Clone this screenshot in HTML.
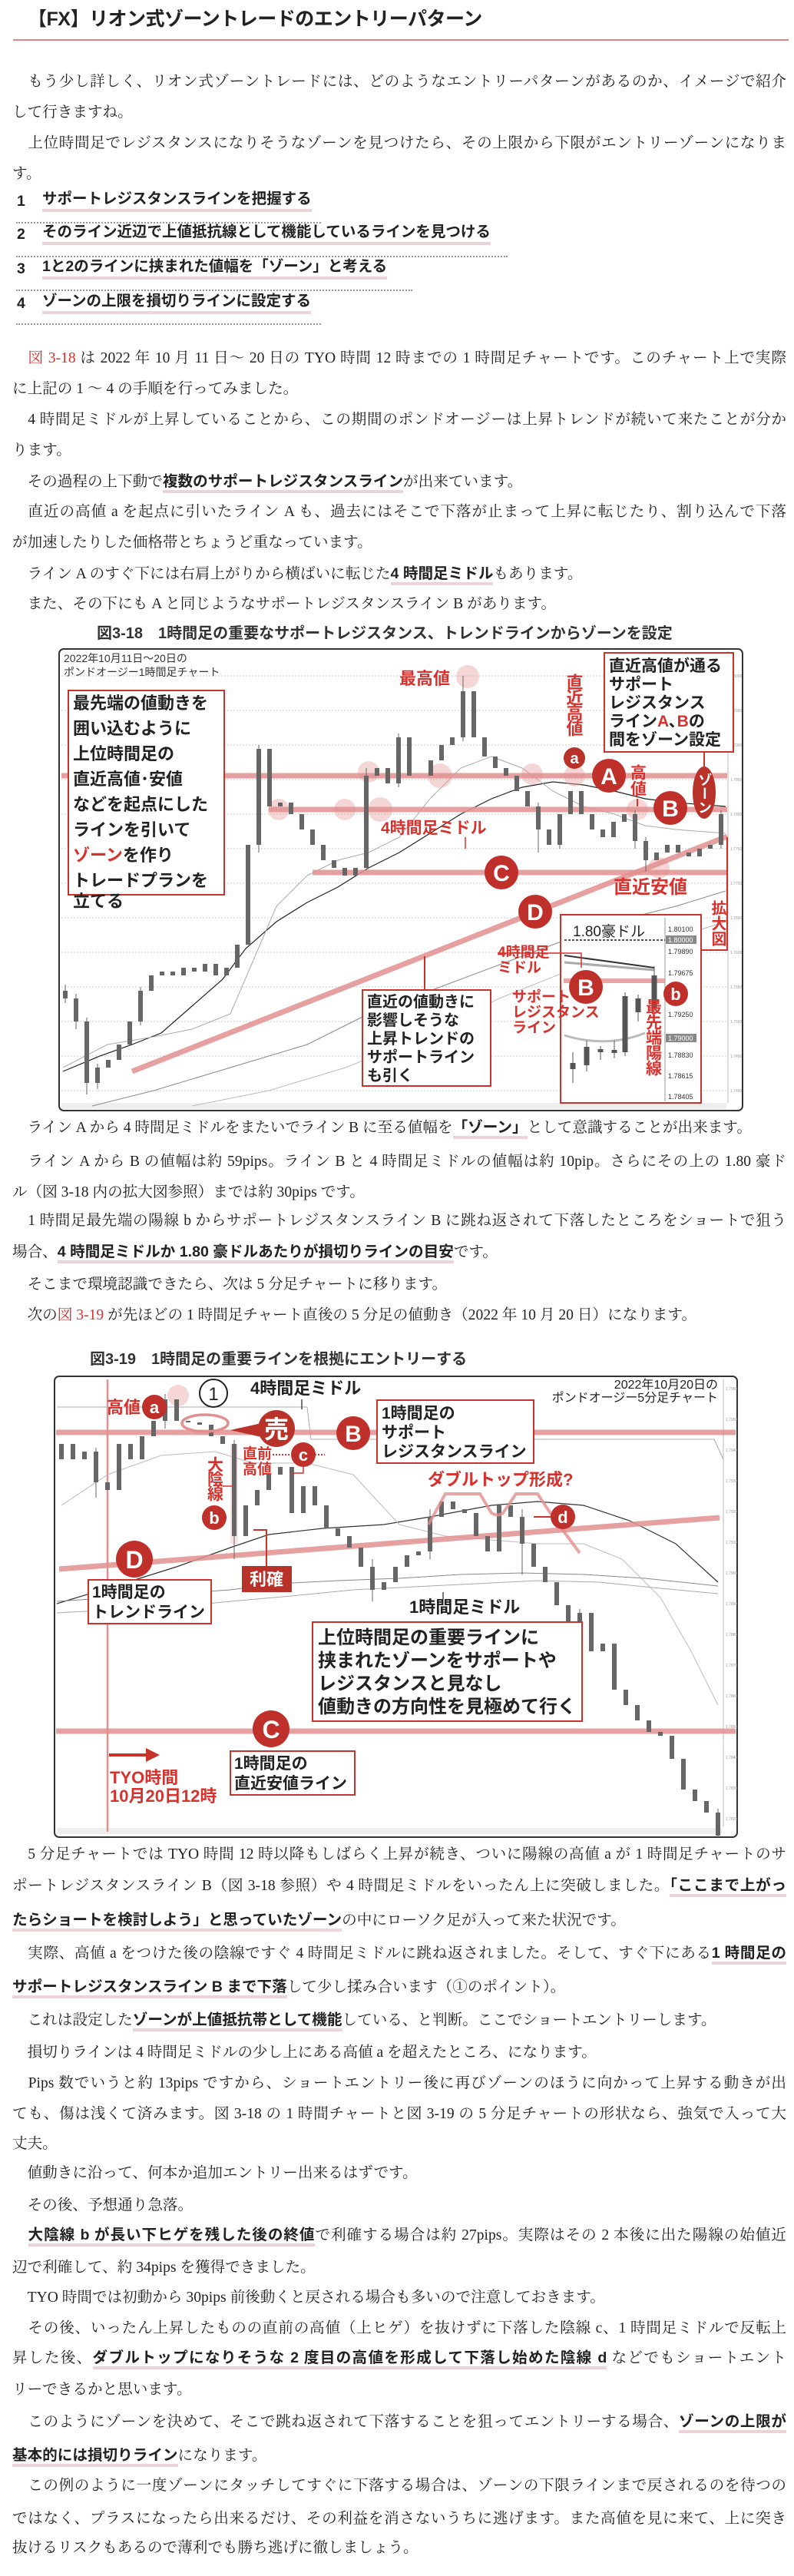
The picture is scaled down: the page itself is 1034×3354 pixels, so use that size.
<!DOCTYPE html>
<html lang="ja"><head><meta charset="utf-8">
<style>
html,body{margin:0;padding:0;background:#fff;}
body{width:1034px;height:3354px;position:relative;overflow:hidden;color:#222;font-family:"Liberation Serif","Noto Serif CJK SC",serif;}
.l{position:absolute;left:16px;width:1008px;height:40px;line-height:40px;font-size:19.6px;white-space:nowrap;}
.j{text-align:justify;text-align-last:justify;}
b{font-family:"Liberation Sans","Noto Sans CJK JP",sans-serif;font-weight:bold;border-bottom:4px solid #ecd3d8;}
.r{color:#d6322e;}
.title{position:absolute;left:36px;top:8px;font-family:"Liberation Sans","Noto Sans CJK JP",sans-serif;font-weight:bold;font-size:25px;line-height:34px;letter-spacing:-0.5px;}
.hr{position:absolute;left:17px;top:51px;width:1010px;height:2px;background:#e08686;}
.li{position:absolute;font-family:"Liberation Sans","Noto Sans CJK JP",sans-serif;font-weight:bold;font-size:19.5px;height:32px;line-height:32px;white-space:nowrap;}
.li .n{position:absolute;left:0;}
.li .t{position:absolute;left:33px;border-bottom:4px solid #ecd3d8;line-height:26px;}
.dot{position:absolute;left:21px;height:0;border-top:2px dotted #999;}
.ft{position:absolute;font-family:"Liberation Sans","Noto Sans CJK JP",sans-serif;font-weight:bold;font-size:20px;color:#333;white-space:nowrap;}
svg{position:absolute;left:0;top:0;}
svg text{font-family:"Liberation Sans","Noto Sans CJK JP",sans-serif;}
</style></head><body>

<div class="title">【FX】リオン式ゾーントレードのエントリーパターン</div>
<div class="hr"></div>

<div class="l j" style="top:87px">　もう少し詳しく、リオン式ゾーントレードには、どのようなエントリーパターンがあるのか、イメージで紹介</div>
<div class="l" style="top:127px">して行きますね。</div>
<div class="l j" style="top:167px">　上位時間足でレジスタンスになりそうなゾーンを見つけたら、その上限から下限がエントリーゾーンになりま</div>
<div class="l" style="top:207px">す。</div>

<div class="li" style="left:22px;top:246px"><span class="n">1</span><span class="t">サポートレジスタンスラインを把握する</span></div>
<div class="dot" style="top:289px;width:397px"></div>
<div class="li" style="left:22px;top:289px"><span class="n">2</span><span class="t">そのライン近辺で上値抵抗線として機能しているラインを見つける</span></div>
<div class="dot" style="top:333px;width:640px"></div>
<div class="li" style="left:22px;top:334px"><span class="n">3</span><span class="t">1と2のラインに挟まれた値幅を「ゾーン」と考える</span></div>
<div class="dot" style="top:377px;width:516px"></div>
<div class="li" style="left:22px;top:379px"><span class="n">4</span><span class="t">ゾーンの上限を損切りラインに設定する</span></div>
<div class="dot" style="top:421px;width:397px"></div>

<div class="l j" style="top:447px">　<span class="r">図 3-18</span> は 2022 年 10 月 11 日～ 20 日の TYO 時間 12 時までの 1 時間足チャートです。このチャート上で実際</div>
<div class="l" style="top:487px">に上記の 1 ～ 4 の手順を行ってみました。</div>
<div class="l j" style="top:527px">　4 時間足ミドルが上昇していることから、この期間のポンドオージーは上昇トレンドが続いて来たことが分か</div>
<div class="l" style="top:567px">ります。</div>
<div class="l" style="top:607px">　その過程の上下動で<b>複数のサポートレジスタンスライン</b>が出来ています。</div>
<div class="l j" style="top:647px">　直近の高値 a を起点に引いたライン A も、過去にはそこで下落が止まって上昇に転じたり、割り込んで下落</div>
<div class="l" style="top:687px">が加速したりした価格帯とちょうど重なっています。</div>
<div class="l" style="top:727px">　ライン A のすぐ下には右肩上がりから横ばいに転じた<b>4 時間足ミドル</b>もあります。</div>
<div class="l" style="top:767px">　また、その下にも A と同じようなサポートレジスタンスライン B があります。</div>
<div class="ft" style="left:126px;top:808px">図3-18　1時間足の重要なサポートレジスタンス、トレンドラインからゾーンを設定</div>

<div class="l" style="top:1448px">　ライン A から 4 時間足ミドルをまたいでライン B に至る値幅を<b>「ゾーン」</b>として意識することが出来ます。</div>
<div class="l j" style="top:1493px">　ライン A から B の値幅は約 59pips。ライン B と 4 時間足ミドルの値幅は約 10pip。さらにその上の 1.80 豪ド</div>
<div class="l" style="top:1533px">ル（図 3-18 内の拡大図参照）までは約 30pips です。</div>
<div class="l j" style="top:1570px">　1 時間足最先端の陽線 b からサポートレジスタンスライン B に跳ね返されて下落したところをショートで狙う</div>
<div class="l" style="top:1610px">場合、<b>4 時間足ミドルか 1.80 豪ドルあたりが損切りラインの目安</b>です。</div>
<div class="l" style="top:1653px">　そこまで環境認識できたら、次は 5 分足チャートに移ります。</div>
<div class="l" style="top:1693px">　次の<span class="r">図 3-19</span> が先ほどの 1 時間足チャート直後の 5 分足の値動き（2022 年 10 月 20 日）になります。</div>
<div class="ft" style="left:117px;top:1753px">図3-19　1時間足の重要ラインを根拠にエントリーする</div>

<div class="l j" style="top:2395px">　5 分足チャートでは TYO 時間 12 時以降もしばらく上昇が続き、ついに陽線の高値 a が 1 時間足チャートのサ</div>
<div class="l j" style="top:2435px">ポートレジスタンスライン B（図 3-18 参照）や 4 時間足ミドルをいったん上に突破しました。<b>「ここまで上がっ</b></div>
<div class="l" style="top:2480px"><b>たらショートを検討しよう」と思っていたゾーン</b>の中にローソク足が入って来た状況です。</div>
<div class="l j" style="top:2523px">　実際、高値 a をつけた後の陰線ですぐ 4 時間足ミドルに跳ね返されました。そして、すぐ下にある<b>1 時間足の</b></div>
<div class="l" style="top:2567px"><b>サポートレジスタンスライン B まで下落</b>して少し揉み合います（①のポイント）。</div>
<div class="l" style="top:2610px">　これは設定した<b>ゾーンが上値抵抗帯として機能</b>している、と判断。ここでショートエントリーします。</div>
<div class="l" style="top:2653px">　損切りラインは 4 時間足ミドルの少し上にある高値 a を超えたところ、になります。</div>
<div class="l j" style="top:2693px">　Pips 数でいうと約 13pips ですから、ショートエントリー後に再びゾーンのほうに向かって上昇する動きが出</div>
<div class="l j" style="top:2733px">ても、傷は浅くて済みます。図 3-18 の 1 時間チャートと図 3-19 の 5 分足チャートの形状なら、強気で入って大</div>
<div class="l" style="top:2772px">丈夫。</div>
<div class="l" style="top:2810px">　値動きに沿って、何本か追加エントリー出来るはずです。</div>
<div class="l" style="top:2852px">　その後、予想通り急落。</div>
<div class="l j" style="top:2890px">　<b>大陰線 b が長い下ヒゲを残した後の終値</b>で利確する場合は約 27pips。実際はその 2 本後に出た陽線の始値近</div>
<div class="l" style="top:2933px">辺で利確して、約 34pips を獲得できました。</div>
<div class="l" style="top:2972px">　TYO 時間では初動から 30pips 前後動くと戻される場合も多いので注意しておきます。</div>
<div class="l j" style="top:3012px">　その後、いったん上昇したものの直前の高値（上ヒゲ）を抜けずに下落した陰線 c、1 時間足ミドルで反転上</div>
<div class="l j" style="top:3050px">昇した後、<b>ダブルトップになりそうな 2 度目の高値を形成して下落し始めた陰線 d</b> などでもショートエント</div>
<div class="l" style="top:3092px">リーできるかと思います。</div>
<div class="l j" style="top:3133px">　このようにゾーンを決めて、そこで跳ね返されて下落することを狙ってエントリーする場合、<b>ゾーンの上限が</b></div>
<div class="l" style="top:3177px"><b>基本的には損切りライン</b>になります。</div>
<div class="l j" style="top:3217px">　この例のように一度ゾーンにタッチしてすぐに下落する場合は、ゾーンの下限ラインまで戻されるのを待つの</div>
<div class="l j" style="top:3260px">ではなく、プラスになったら出来るだけ、その利益を消さないうちに逃げます。また高値を見に来て、上に突き</div>
<div class="l" style="top:3298px">抜けるリスクもあるので薄利でも勝ち逃げに徹しましょう。</div>

<svg width="1034" height="3354" viewBox="0 0 1034 3354">
<!-- ============ CHART 1 ============ -->
<rect x="77" y="845" width="890" height="601" rx="6" fill="#fff" stroke="#333" stroke-width="2"/>
<g stroke="#ccc" stroke-width="1" stroke-dasharray="2,2">
<path d="M80 880H947M80 925H947M80 970H947M80 1015H947M80 1060H947M80 1105H947M80 1150H947M80 1195H947M80 1240H947M80 1285H947M80 1330H947M80 1375H947M80 1420H947"/>
</g>
<path d="M948 848V1436" stroke="#bbb"/>
<g fill="#999" font-size="5">
<text x="951" y="882">1.8000</text><text x="951" y="927">1.7950</text><text x="951" y="972">1.7900</text><text x="951" y="1017">1.7850</text><text x="951" y="1062">1.7800</text><text x="951" y="1107">1.7750</text><text x="951" y="1152">1.7700</text><text x="951" y="1197">1.7650</text><text x="951" y="1242">1.7600</text><text x="951" y="1287">1.7550</text><text x="951" y="1332">1.7500</text><text x="951" y="1377">1.7450</text><text x="951" y="1422">1.7400</text>
</g>
<rect x="80" y="1436" width="866" height="8" fill="#eee"/>
<!-- moving averages -->
<path d="M82 1395L130 1375L172 1360L210 1345L250 1310L290 1275L320 1235L360 1200L400 1175L440 1155L480 1130L520 1110L560 1085L600 1060L640 1040L680 1025L720 1018L760 1022L800 1030L840 1040L880 1045L945 1050" fill="none" stroke="#222" stroke-width="1.2"/>
<path d="M82 1390L140 1360L200 1350L250 1340L300 1320L330 1250L360 1180L400 1140L440 1120L480 1110L520 1090L560 1040L600 1000L640 985L680 1000L720 1030L760 1050L800 1060L840 1075L880 1080L945 1085" fill="none" stroke="#aaa" stroke-width="1"/>
<path d="M120 1440L200 1420L300 1390L400 1360L480 1320L560 1290L640 1260L720 1230L800 1200L880 1180L945 1160" fill="none" stroke="#888" stroke-width="1"/>
<path d="M250 1440L350 1420L450 1390L550 1350L650 1300L750 1260L850 1230L945 1200" fill="none" stroke="#bbb" stroke-width="1"/>
<!-- pink highlight circles -->
<g fill="#e8a5a5" fill-opacity="0.45">
<circle cx="609" cy="881" r="15"/><circle cx="480" cy="1005" r="14"/><circle cx="573" cy="1010" r="16"/><circle cx="693" cy="1008" r="14"/><circle cx="748" cy="1010" r="14"/><circle cx="363" cy="1054" r="14"/><circle cx="449" cy="1054" r="14"/><circle cx="495" cy="1054" r="16"/><circle cx="830" cy="1054" r="14"/><circle cx="858" cy="1130" r="14"/>
</g>
<!-- lines -->
<g stroke="#e28f8f" stroke-opacity="0.85" stroke-width="7">
<path d="M80 1010H947"/><path d="M350 1054H947"/><path d="M407 1136H947"/><path d="M172 1395L947 1089"/>
</g>
<!-- candles -->
<path d="M85 1290V1300M99 1300V1330M113 1330V1410M127 1410V1390M141 1390V1380M155 1380V1360M169 1360V1330M183 1330V1290M197 1290V1270M211 1270V1265M225 1265V1270M239 1270V1260M253 1260V1265M267 1265V1255M281 1255V1270M295 1270V1260M309 1260V1230M323 1230V1100M337 1100V975M351 975V1050M365 1050V1045M379 1045V1060M393 1060V1080M407 1080V1100M421 1100V1120M435 1120V1130M449 1130V1140M463 1140V1130M477 1130V1010M491 1010V1000M505 1000V1020M519 1020V960M533 960V1010M547 1010V1010M561 1010V990M575 990V970M589 970V960M603 960V900M617 900V960M631 960V985M645 985V1000M659 1000V1010M673 1010V1030M687 1030V1050M701 1050V1080M715 1080V1100M729 1100V1060M743 1060V1030M757 1030V1060M771 1060V1080M785 1080V1090M799 1090V1070M813 1070V1060M827 1060V1095M841 1095V1120M855 1120V1110M869 1110V1100M883 1100V1110M897 1110V1115M911 1115V1105M925 1105V1100M939 1100V1060" stroke="#666" stroke-width="6" fill="none"/>
<path d="M85 1282V1306M99 1294V1340M113 1325V1425M127 1385V1418M183 1285V1335M323 1220V1110M337 970V1110M477 1125V1000M519 955V1025M603 880V965M701 1045V1110M729 1105V1060M827 1055V1105M841 1090V1135M939 1055V1105" stroke="#666" stroke-width="1" fill="none"/>
<!-- labels -->
<text x="83" y="862" font-size="14" fill="#333">2022年10月11日～20日の</text>
<text x="83" y="880" font-size="14" fill="#333">ポンドオージー1時間足チャート</text>
<rect x="89" y="899" width="203" height="266" fill="#fff" stroke="#c8332b" stroke-width="2"/>
<g font-size="22" font-weight="bold" fill="#222">
<text x="95" y="923">最先端の値動きを</text>
<text x="95" y="956">囲い込むように</text>
<text x="95" y="989">上位時間足の</text>
<text x="95" y="1022">直近高値･安値</text>
<text x="95" y="1055">などを起点にした</text>
<text x="95" y="1088">ラインを引いて</text>
<text x="95" y="1121"><tspan fill="#d6322e">ゾーン</tspan>を作り</text>
<text x="95" y="1154">トレードプランを</text>
<text x="95" y="1187" dy="-6">立てる</text>
</g>
<text x="520" y="891" font-size="22" font-weight="bold" fill="#d6322e">最高値</text>
<text x="747" y="877" font-size="22" font-weight="bold" fill="#d6322e" style="writing-mode:vertical-rl;text-orientation:upright" letter-spacing="-2">直近高値</text>
<circle cx="748" cy="987" r="14" fill="#b8322a"/><text x="748" y="994" font-size="20" font-weight="bold" fill="#fff" text-anchor="middle">a</text>
<circle cx="793" cy="1010" r="22" fill="#c0302a"/><text x="793" y="1021" font-size="30" font-weight="bold" fill="#fff" text-anchor="middle">A</text>
<text x="830" y="995" font-size="21" font-weight="bold" fill="#d6322e" style="writing-mode:vertical-rl;text-orientation:upright">高値</text>
<path d="M830 1040V1050" stroke="#d6322e" stroke-width="2"/>
<circle cx="873" cy="1052" r="22" fill="#c0302a"/><text x="873" y="1063" font-size="30" font-weight="bold" fill="#fff" text-anchor="middle">B</text>
<ellipse cx="917" cy="1032" rx="15" ry="34" fill="#b8322a"/>
<text x="917" y="1006" font-size="18" font-weight="bold" fill="#fff" style="writing-mode:vertical-rl;text-orientation:upright">ゾーン</text>
<path d="M917 979V998" stroke="#c8332b" stroke-width="2"/>
<rect x="787" y="850" width="168" height="129" fill="#fff" stroke="#c8332b" stroke-width="2"/>
<g font-size="21" font-weight="bold" fill="#222">
<text x="793" y="874">直近高値が通る</text>
<text x="793" y="898">サポート</text>
<text x="793" y="922">レジスタンス</text>
<text x="793" y="946">ライン<tspan fill="#d6322e">A</tspan>､<tspan fill="#d6322e">B</tspan>の</text>
<text x="793" y="970">間をゾーン設定</text>
</g>
<text x="496" y="1085" font-size="21" font-weight="bold" fill="#d6322e">4時間足ミドル</text>
<path d="M606 1090V1105" stroke="#d6322e" stroke-width="1.5"/>
<circle cx="653" cy="1136" r="22" fill="#c0302a"/><text x="653" y="1147" font-size="30" font-weight="bold" fill="#fff" text-anchor="middle">C</text>
<text x="799" y="1163" font-size="24" font-weight="bold" fill="#d6322e">直近安値</text>
<circle cx="697" cy="1187" r="22" fill="#c0302a"/><text x="697" y="1198" font-size="30" font-weight="bold" fill="#fff" text-anchor="middle">D</text>
<text x="934" y="1172" font-size="20" font-weight="bold" fill="#d6322e" style="writing-mode:vertical-rl;text-orientation:upright">拡大図</text>
<path d="M947 1090V1237H913" stroke="#c8332b" stroke-width="2" fill="none"/>
<!-- inset -->
<rect x="730" y="1191" width="183" height="245" fill="#fff" stroke="#c8332b" stroke-width="2"/>
<path d="M866 1195V1434" stroke="#999"/>
<text x="746" y="1219" font-size="19" fill="#222">1.80豪ドル</text>
<path d="M735 1224H866" stroke="#555" stroke-width="2" stroke-dasharray="3,2"/>
<rect x="867" y="1218" width="40" height="11" fill="#888"/>
<g font-size="9" fill="#333">
<text x="870" y="1213">1.80100</text><text x="870" y="1227" fill="#fff">1.80000</text><text x="870" y="1242">1.79890</text><text x="870" y="1270">1.79675</text><text x="870" y="1324">1.79250</text><text x="870" y="1377">1.78830</text><text x="870" y="1404">1.78615</text><text x="870" y="1431">1.78405</text>
</g>
<rect x="867" y="1346" width="40" height="11" fill="#888"/><text x="870" y="1355" font-size="9" fill="#fff">1.79000</text>
<path d="M735 1244L852 1260" stroke="#333" stroke-width="2"/>
<path d="M735 1253L852 1263" stroke="#aaa" stroke-width="3"/>
<path d="M734 1277H866" stroke="#e28f8f" stroke-width="6" stroke-opacity="0.8"/>
<path d="M735 1348Q790 1365 840 1345" stroke="#bbb" stroke-width="3" fill="none"/>
<path d="M648 1241H757V1260" stroke="#d6322e" stroke-width="1.5" fill="none"/>
<text x="648" y="1246" font-size="19" font-weight="bold" fill="#d6322e">4時間足</text>
<text x="648" y="1266" font-size="19" font-weight="bold" fill="#d6322e">ミドル</text>
<path d="M746 1384V1392M764 1363V1387M782 1366V1370M800 1367V1371M814 1297V1370M831 1300V1318M852 1270V1313" stroke="#555" stroke-width="7"/>
<path d="M746 1370V1410M764 1355V1395M782 1362V1380M800 1355V1378M814 1292V1375M831 1295V1330M852 1258V1320" stroke="#555" stroke-width="1"/>
<circle cx="763" cy="1285" r="22" fill="#c0302a"/><text x="763" y="1296" font-size="30" font-weight="bold" fill="#fff" text-anchor="middle">B</text>
<g font-size="19" font-weight="bold" fill="#d6322e">
<text x="667" y="1304">サポート</text><text x="667" y="1324">レジスタンス</text><text x="667" y="1344">ライン</text>
</g>
<circle cx="880" cy="1294" r="16" fill="#c0302a"/><text x="880" y="1302" font-size="22" font-weight="bold" fill="#fff" text-anchor="middle">b</text>
<text x="850" y="1300" font-size="21" font-weight="bold" fill="#d6322e" style="writing-mode:vertical-rl;text-orientation:upright" letter-spacing="-1">最先端陽線</text>
<!-- bottom box -->
<path d="M553 1245V1289" stroke="#c8332b" stroke-width="2"/>
<rect x="472" y="1289" width="167" height="125" fill="#fff" stroke="#c8332b" stroke-width="2"/>
<g font-size="20" font-weight="bold" fill="#222">
<text x="478" y="1311">直近の値動きに</text><text x="478" y="1335">影響しそうな</text><text x="478" y="1359">上昇トレンドの</text><text x="478" y="1383">サポートライン</text><text x="478" y="1407">も引く</text>
</g>

<!-- ============ CHART 2 ============ -->
<rect x="71" y="1792" width="889" height="600" rx="6" fill="#fff" stroke="#333" stroke-width="2"/>
<path d="M942 1796V2378" stroke="#bbb"/>
<g fill="#999" font-size="5">
<text x="945" y="1810">1.7960</text><text x="945" y="1850">1.7950</text><text x="945" y="1890">1.7940</text><text x="945" y="1930">1.7930</text><text x="945" y="1970">1.7920</text><text x="945" y="2010">1.7910</text><text x="945" y="2050">1.7900</text><text x="945" y="2090">1.7890</text><text x="945" y="2130">1.7880</text><text x="945" y="2170">1.7870</text><text x="945" y="2210">1.7860</text><text x="945" y="2250">1.7850</text><text x="945" y="2290">1.7840</text><text x="945" y="2330">1.7830</text><text x="945" y="2370">1.7820</text>
</g>
<rect x="74" y="2380" width="866" height="8" fill="#eee"/>
<path d="M140 1796V2385" stroke="#e28f8f" stroke-width="2.5"/>
<path d="M74 1832H400L405 1874H930L942 1900" stroke="#aaa" stroke-width="1" fill="none"/>
<path d="M74 2088L150 2065L230 2040L300 2015L350 1998L420 1990L500 1985L560 1975L640 1960L700 1955L760 1960L820 1980L880 2010L935 2060" fill="none" stroke="#333" stroke-width="1.2"/>
<path d="M74 2085L150 2080L230 2075L300 2070L360 2062L440 2058L520 2055L600 2050L680 2048L760 2050L840 2055L935 2065" fill="none" stroke="#888" stroke-width="1"/>
<path d="M74 2100L150 2096L230 2092L300 2085L380 2078L460 2070L540 2066L620 2062L700 2058L780 2060L860 2068L935 2075" fill="none" stroke="#aaa" stroke-width="1"/>
<path d="M80 1960L140 1920L210 1895L280 1890L330 1905L400 1905L460 1920L520 1985L580 2000L640 2005L700 2010L760 2010L810 2030L860 2080L900 2150L935 2220" fill="none" stroke="#bbb" stroke-width="1"/>
<circle cx="232" cy="1817" r="14" fill="#e8a5a5" fill-opacity="0.45"/>
<rect x="300" y="1880" width="10" height="130" fill="#e8a5a5" fill-opacity="0.3"/>
<g stroke="#e28f8f" stroke-opacity="0.85" stroke-width="7">
<path d="M73 1865H958"/><path d="M73 2254H958"/><path d="M77 2043L937 1976"/>
</g>
<path d="M80 1900V1880M95 1880V1900M110 1900V1890M125 1890V1930M140 1930V1940M155 1940V1880M170 1880V1900M185 1900V1870M200 1870V1850M215 1850V1822M230 1822V1850M245 1850V1852M260 1852V1855M275 1855V1870M290 1870V1880M305 1880V2000M320 2000V1960M335 1960V1940M350 1940V1920M365 1920V1910M380 1910V1970M395 1970V1935M410 1935V1960M425 1960V1990M440 1990V2000M455 2000V2015M470 2015V2040M485 2040V2070M500 2070V2060M515 2060V2040M530 2040V2025M545 2025V2020M560 2020V1975M575 1975V1955M590 1955V1965M605 1965V1970M620 1970V2000M635 2000V2020M650 2020V1960M665 1960V1975M680 1975V2010M695 2010V2040M710 2040V2060M725 2060V2090M740 2090V2120M755 2120V2100M770 2100V2150M785 2150V2140M800 2140V2200M815 2200V2220M830 2220V2240M845 2240V2255M860 2255V2260M875 2260V2290M890 2290V2330M905 2330V2345M920 2345V2360M935 2360V2390" stroke="#666" stroke-width="6" fill="none"/>
<path d="M125 1885V1950M215 1815V1860M305 1875V2030M485 2030V2085M560 1965V2030M680 1965V2050M755 2095V2130M935 2355V2392" stroke="#666" stroke-width="1"/>
<!-- chart2 labels -->
<text x="139" y="1840" font-size="22" font-weight="bold" fill="#d6322e">高値</text>
<circle cx="201" cy="1832" r="16" fill="#c0302a"/><text x="201" y="1840" font-size="22" font-weight="bold" fill="#fff" text-anchor="middle">a</text>
<circle cx="278" cy="1814" r="18" fill="#fff" stroke="#222" stroke-width="2"/><text x="278" y="1823" font-size="24" fill="#222" text-anchor="middle">1</text>
<text x="326" y="1815" font-size="22" font-weight="bold" fill="#222">4時間足ミドル</text>
<path d="M393 1822V1835" stroke="#222" stroke-width="1.2"/>
<ellipse cx="267" cy="1853" rx="30" ry="11" fill="none" stroke="#e28f8f" stroke-width="3.5"/>
<path d="M300 1862L345 1852L345 1872Z" fill="#b8322a"/>
<circle cx="360" cy="1860" r="24" fill="#b8322a"/><text x="360" y="1872" font-size="32" font-weight="bold" fill="#fff" text-anchor="middle">売</text>
<circle cx="460" cy="1866" r="22" fill="#c0302a"/><text x="460" y="1877" font-size="30" font-weight="bold" fill="#fff" text-anchor="middle">B</text>
<rect x="491" y="1823" width="204" height="82" fill="#fff" stroke="#c8332b" stroke-width="2"/>
<g font-size="21" font-weight="bold" fill="#222">
<text x="497" y="1847">1時間足の</text><text x="497" y="1872">サポート</text><text x="497" y="1897">レジスタンスライン</text>
</g>
<text x="935" y="1808" font-size="16" fill="#222" text-anchor="end">2022年10月20日の</text>
<text x="935" y="1825" font-size="16" fill="#222" text-anchor="end">ポンドオージー5分足チャート</text>
<text x="316" y="1899" font-size="19" font-weight="bold" fill="#d6322e">直前</text>
<text x="316" y="1919" font-size="19" font-weight="bold" fill="#d6322e">高値</text>
<path d="M355 1894H380M410 1894H423" stroke="#d6322e" stroke-width="2" stroke-dasharray="2,2"/>
<path d="M395 1905V1918H380" stroke="#d6322e" stroke-width="1.5" fill="none"/>
<circle cx="395" cy="1894" r="16" fill="#c0302a"/><text x="395" y="1902" font-size="22" font-weight="bold" fill="#fff" text-anchor="middle">c</text>
<text x="279" y="1896" font-size="21" font-weight="bold" fill="#d6322e" style="writing-mode:vertical-rl;text-orientation:upright" letter-spacing="-2">大陰線</text>
<path d="M290 1935H304" stroke="#d6322e" stroke-width="1.5"/>
<circle cx="279" cy="1976" r="16" fill="#c0302a"/><text x="279" y="1984" font-size="22" font-weight="bold" fill="#fff" text-anchor="middle">b</text>
<text x="557" y="1934" font-size="22" font-weight="bold" fill="#d6322e">ダブルトップ形成?</text>
<path d="M558 1985L580 1945H625L640 1970Q648 1975 655 1970L672 1945H700L720 1975L755 2022" fill="none" stroke="#e28f8f" stroke-width="4" stroke-opacity="0.8"/>
<path d="M695 1975H720" stroke="#c8332b" stroke-width="2"/>
<circle cx="733" cy="1975" r="16" fill="#c0302a"/><text x="733" y="1983" font-size="22" font-weight="bold" fill="#fff" text-anchor="middle">d</text>
<circle cx="175" cy="2030" r="24" fill="#c0302a"/><text x="175" y="2042" font-size="32" font-weight="bold" fill="#fff" text-anchor="middle">D</text>
<rect x="115" y="2057" width="160" height="57" fill="#fff" stroke="#c8332b" stroke-width="2"/>
<text x="120" y="2080" font-size="21" font-weight="bold" fill="#222">1時間足の</text>
<text x="120" y="2106" font-size="21" font-weight="bold" fill="#222">トレンドライン</text>
<path d="M330 1992H347V2039" stroke="#c8332b" stroke-width="2" fill="none"/>
<rect x="315" y="2039" width="65" height="34" fill="#b8322a"/><text x="347" y="2064" font-size="22" font-weight="bold" fill="#fff" text-anchor="middle">利確</text>
<path d="M577 2073V2082" stroke="#222" stroke-width="1.2"/>
<text x="533" y="2100" font-size="22" font-weight="bold" fill="#222">1時間足ミドル</text>
<rect x="407" y="2112" width="351" height="129" fill="#fff" stroke="#c8332b" stroke-width="2"/>
<g font-size="24" font-weight="bold" fill="#222">
<text x="414" y="2140">上位時間足の重要ラインに</text><text x="414" y="2170">挟まれたゾーンをサポートや</text><text x="414" y="2200">レジスタンスと見なし</text><text x="414" y="2230">値動きの方向性を見極めて行く</text>
</g>
<circle cx="353" cy="2251" r="24" fill="#c0302a"/><text x="353" y="2263" font-size="32" font-weight="bold" fill="#fff" text-anchor="middle">C</text>
<path d="M142 2285H192" stroke="#c8332b" stroke-width="4"/><path d="M190 2276L208 2285L190 2294Z" fill="#c8332b"/>
<text x="143" y="2322" font-size="22" font-weight="bold" fill="#d6322e">TYO時間</text>
<text x="143" y="2346" font-size="22" font-weight="bold" fill="#d6322e">10月20日12時</text>
<rect x="300" y="2280" width="162" height="57" fill="#fff" stroke="#c8332b" stroke-width="2"/>
<text x="305" y="2303" font-size="21" font-weight="bold" fill="#222">1時間足の</text>
<text x="305" y="2329" font-size="21" font-weight="bold" fill="#222">直近安値ライン</text>
</svg>
</body></html>
